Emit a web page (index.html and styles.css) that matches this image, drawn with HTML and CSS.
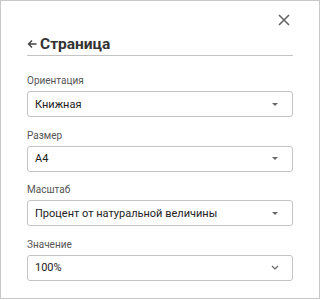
FILE: index.html
```html
<!DOCTYPE html>
<html>

<head>
    <title>Страница</title>
    <link rel="stylesheet" href="styles.css">
</head>

<body>
    <div class="panel">
        <div class="panel-top">
            <span class="close-btn">
                <svg width="12" height="12" viewBox="0 0 12 12">
                    <path d="M1 1 L11 11 M11 1 L1 11" stroke="#666" stroke-width="1.6" fill="none" />
                </svg>
            </span>
        </div>
        <div class="panel-title">
            <svg class="back-icon" width="10" height="10" viewBox="0 0 10 10">
                <path d="M9.5 5 H1.5 M5 1.5 L1.5 5 L5 8.5" stroke="#444" stroke-width="1.4" fill="none" />
            </svg>
            <span>Страница</span>
        </div>

        <div class="field-group">
            <label>Ориентация</label>
            <div class="select-box">
                <span>Книжная</span>
                <span class="caret"></span>
            </div>
        </div>
        <div class="field-group">
            <label>Размер</label>
            <div class="select-box">
                <span>A4</span>
                <span class="caret"></span>
            </div>
        </div>
        <div class="field-group">
            <label>Масштаб</label>
            <div class="select-box">
                <span>Процент от натуральной величины</span>
                <span class="caret"></span>
            </div>
        </div>
        <div class="field-group">
            <label>Значение</label>
            <div class="select-box">
                <span>100%</span>
                <svg class="chevron" width="8" height="5" viewBox="0 0 8 5">
                    <path d="M1 1 L4 4 L7 1" stroke="#666" stroke-width="1.2" fill="none" />
                </svg>
            </div>
        </div>
    </div>
</body>

</html>
```

FILE: styles.css
```css
body {
    margin: 0;
    font-family: Roboto, "Liberation Sans", Arial, sans-serif;
    background-color: #fff;
}

.panel {
    width: 320px;
    height: 299px;
    box-sizing: border-box;
    border: 1px solid #c8c8c8;
    padding: 7px 26px 0 26px;
}

.panel-top {
    display: flex;
    justify-content: flex-end;
    height: 24px;
    align-items: center;
}

.close-btn {
    display: flex;
    margin-right: 3px;
}

.panel-title {
    display: flex;
    align-items: center;
    height: 23px;
    border-bottom: 1px solid #c4c4c4;
    font-size: 15.5px;
    font-weight: bold;
    color: #333;
}

.back-icon {
    margin-right: 3px;
}

.field-group {
    margin-top: 18px;
}

.field-group + .field-group {
    margin-top: 11.5px;
}

label {
    display: block;
    font-size: 10px;
    line-height: 14px;
    color: #555;
    margin-bottom: 3px;
}

.select-box {
    display: flex;
    justify-content: space-between;
    align-items: center;
    height: 26px;
    box-sizing: border-box;
    border: 1px solid #c4c4c4;
    border-radius: 3px;
    padding: 0 12px 0 7px;
    font-size: 11px;
    color: #222;
}

.caret {
    width: 0;
    height: 0;
    border-left: 3px solid transparent;
    border-right: 3px solid transparent;
    border-top: 3px solid #666;
    margin-right: 2px;
}

.chevron {
    margin-right: 1px;
}
```
